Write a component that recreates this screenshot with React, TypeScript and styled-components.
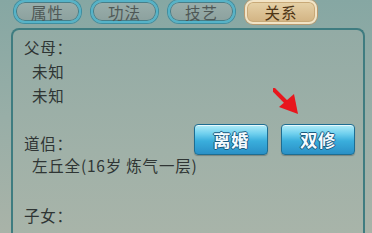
import styled, { createGlobalStyle } from 'styled-components';

const GlobalStyle = createGlobalStyle`
  html, body {
    margin: 0;
    padding: 0;
  }
  body {
    width: 372px;
    height: 233px;
    overflow: hidden;
    font-family: 'Noto Sans CJK SC', 'Noto Sans', sans-serif;
  }
`;

const tabs = [
	{ label: '属性', active: false },
	{ label: '功法', active: false },
	{ label: '技艺', active: false },
	{ label: '关系', active: true },
];

export default function App() {
	return (
		<>
			<GlobalStyle />
			<Screen>
				<TabBar>
					{tabs.map((t) => (
						<Tab key={t.label} $active={t.active}>
							{t.label}
						</Tab>
					))}
				</TabBar>
				<Panel>
					<Label>父母：</Label>
					<Item>未知</Item>
					<Item>未知</Item>
					<PartnerRow>
						<Label>道侣：</Label>
						<Actions>
							<ActionButton>离婚</ActionButton>
							<ActionButton>双修</ActionButton>
						</Actions>
					</PartnerRow>
					<Item $tight>左丘全(16岁 炼气一层)</Item>
					<Label $spaced>子女：</Label>
					<Arrow width='30' height='30' viewBox='0 0 30 30'>
						<line x1='1' y1='2' x2='15' y2='16' stroke='#e8161d' strokeWidth='4' strokeLinecap='round' />
						<polygon points='6,19 21,6 25,26' fill='#e8161d' />
					</Arrow>
				</Panel>
			</Screen>
		</>
	);
}

const Screen = styled.div`
  width: 372px;
  height: 233px;
  background: linear-gradient(180deg, #86a7a3 0%, #98aea7 50%, #a9b3a8 100%);
  overflow: hidden;
  display: flex;
  flex-direction: column;
`;

const TabBar = styled.div`
  display: flex;
  gap: 10px;
  padding: 0 0 0 14px;
  height: 27px;
  box-sizing: border-box;
`;

const Tab = styled.div<{ $active: boolean }>`
  width: ${(p) => (p.$active ? '72px' : '67px')};
  height: ${(p) => (p.$active ? '24px' : '23px')};
  box-sizing: border-box;
  display: flex;
  align-items: center;
  justify-content: center;
  font-size: 15.5px;
  letter-spacing: 1px;
  border-radius: ${(p) => (p.$active ? '8px' : '11px')};
  color: ${(p) => (p.$active ? '#4e3515' : '#4f5856')};
  background: ${(p) =>
		p.$active
			? 'linear-gradient(180deg, #e6d2a8 0%, #d2b383 100%)'
			: 'linear-gradient(180deg, #9aaeab 0%, #8ca19e 100%)'};
  border: 2px solid ${(p) => (p.$active ? '#f2e4c6' : '#55b3c8')};
  box-shadow: ${(p) =>
		p.$active
			? '0 0 0 1px #b89a70, inset 0 0 0 1px #c8a978'
			: '0 0 0 1px #3f8ea0, inset 0 0 0 1px #477f89'};
`;

const Panel = styled.div`
  position: relative;
  margin: 1px 7px 0 11px;
  flex: 1;
  border: 2px solid #3f7c80;
  border-bottom: none;
  border-radius: 8px 8px 0 0;
  background: linear-gradient(180deg, #93aba5 0%, #a0b1a8 60%, #a8b4a9 100%);
  padding: 5px 8px 0 11px;
  color: #2f3534;
  font-size: 15.5px;
  letter-spacing: 0.8px;
`;

const Label = styled.div<{ $spaced?: boolean }>`
  line-height: 24px;
  margin-top: ${(p) => (p.$spaced ? '26px' : '0')};
`;

const Item = styled.div<{ $tight?: boolean }>`
  line-height: 24px;
  padding-left: 8px;
  margin-top: ${(p) => (p.$tight ? '-2px' : '0')};
`;

const PartnerRow = styled.div`
  display: flex;
  justify-content: space-between;
  align-items: flex-end;
  margin-top: 17px;
`;

const Actions = styled.div`
  display: flex;
  gap: 13px;
`;

const ActionButton = styled.button`
  width: 74px;
  height: 31px;
  padding: 0;
  border: 1px solid #1d6d92;
  border-radius: 4px;
  background: linear-gradient(180deg, #b2ecf8 0%, #6fd0ee 30%, #3aaedc 55%, #2a90c6 100%);
  box-shadow: inset 0 1px 0 rgba(255, 255, 255, 0.7), 0 1px 1px rgba(0, 0, 0, 0.25);
  font-family: 'Noto Sans CJK SC', sans-serif;
  font-size: 17.5px;
  font-weight: 700;
  letter-spacing: 0.5px;
  color: #f4fbff;
  text-shadow: -1px 0 #1a5a7e, 1px 0 #1a5a7e, 0 -1px #1a5a7e, 0 1px #1a5a7e;
`;

const Arrow = styled.svg`
  position: absolute;
  left: 260px;
  top: 58px;
`;
